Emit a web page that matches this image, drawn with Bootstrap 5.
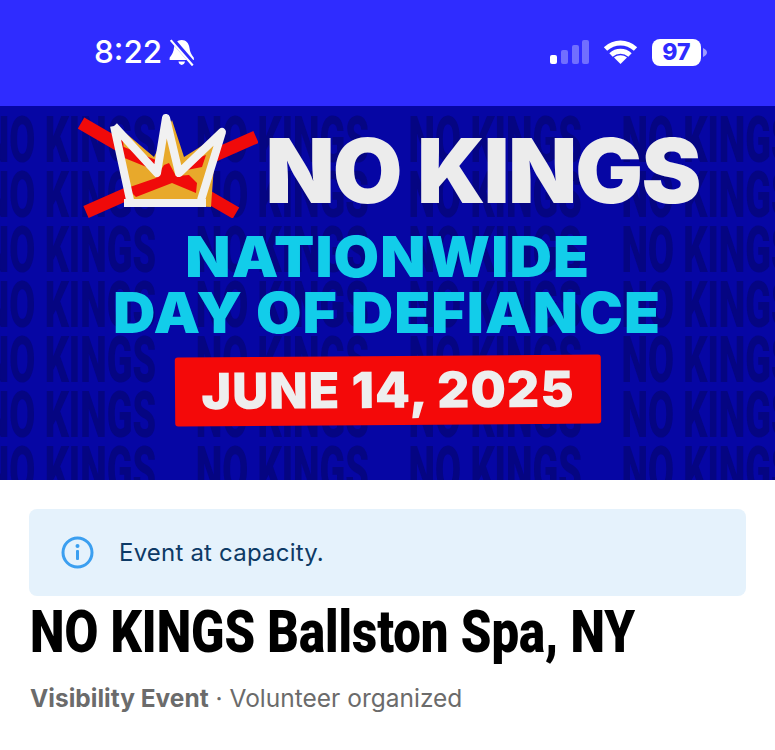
<!doctype html>
<html><head><meta charset="utf-8">
<link href="https://cdn.jsdelivr.net/npm/bootstrap@5.3.0/dist/css/bootstrap.min.css" rel="stylesheet">
<style>
body{background:#fff;margin:0;width:775px;overflow-x:hidden;font-family:Inter,"Liberation Sans",sans-serif}
.stat{height:106px;background:#2f2cff;color:#fff;padding:32px 68px 0 94px;align-items:flex-start}
.clock{font-size:31.500px;font-weight:500;line-height:40px}
.hero{height:374px;background:#0606a4;overflow:hidden;position:relative}
.wall{position:absolute;top:7px;left:-230px;width:2400px;font:900 65px/55px Roboto,sans-serif;color:#050582;white-space:nowrap;transform:scaleX(.58);transform-origin:left top}
.wallrow{display:flex;height:55px}
.wallrow span{flex:0 0 367px}
.art{position:relative;height:100%}
.nk{font:900 90px/90px Inter,sans-serif;color:#ececec;letter-spacing:-1.800px;white-space:nowrap;margin-top:13px}
.hl{font:900 56px/56px Inter,sans-serif;color:#12cdea;letter-spacing:1px;white-space:nowrap;transform:scaleX(1.05)}
.dateb{background:#f40909;width:426px;height:69px;font:900 50px/69px Inter,sans-serif;color:#eee;letter-spacing:1px;transform:rotate(-.4deg);border-radius:3px;margin-top:15px}
.notice{margin:29px 29px 0;height:87px;background:#e5f2fc;border-radius:8px;padding-left:32px;color:#0d3a66;font-size:24px;letter-spacing:.2px;gap:25px}
.ttl{font:900 60px/60px Roboto,sans-serif;color:#000;margin:6px 0 0 30px;white-space:nowrap;transform:scaleX(.817);transform-origin:left center}
.sub{margin:21px 0 0 30px;font-size:24.500px;color:#6b6b6b;line-height:30px}
</style></head><body>
<div class="stat d-flex justify-content-between">
<div class="d-flex align-items-center" style="gap:7px"><span class="clock">8:22</span>
<svg width="26" height="27" viewBox="2 1 22.500 24.500"><path fill="#fff" d="M13 2c4 0 6.500 3 7 7 .5 4 1.500 6 4 9v2H2v-2c2.500-3 3.500-5 4-9 .5-4 3-7 7-7zM10 21.500h6c-.5 2-1.500 3-3 3s-2.500-1-3-3z"/><path stroke="#2f2cff" stroke-width="4.500" d="M4 1l20 23"/><path stroke="#fff" stroke-width="2" d="M3 2l20 23"/></svg></div>
<div class="d-flex align-items-center" style="gap:14px;height:40px">
<svg width="39" height="24" viewBox="0 0 39 24"><rect y="15" width="7" height="9" rx="2" fill="#fff"/><rect x="11" y="10" width="7" height="14" rx="2" fill="#716fff"/><rect x="22" y="5" width="7" height="19" rx="2" fill="#716fff"/><rect x="32" y="0" width="7" height="24" rx="2" fill="#716fff"/></svg>
<svg width="35" height="24" viewBox="0 0 35 24"><path fill="none" stroke="#fff" stroke-width="5" d="M2.500 9c9-8 21-8 30 0M8 15c5.500-5 13.500-5 19 0"/><path fill="#fff" d="M17.500 24l-6.500-6.500c4-3 9-3 13 0z"/></svg>
<svg width="55" height="27" viewBox="0 0 55 27"><rect width="49" height="27" rx="8" fill="#fff"/><text x="24.500" y="21" text-anchor="middle" font-family="Inter" font-weight="800" font-size="23" fill="#2f2cff">97</text><path d="M51 9c2.500 1 4 3 4 4.500S53.500 17 51 18z" fill="#9d9cff"/></svg>
</div></div>
<div class="hero">
<div class="wall">
<div class="wallrow"><span>NO KINGS</span><span>NO KINGS</span><span>NO KINGS</span><span>NO KINGS</span><span>NO KINGS</span><span>NO KINGS</span></div>
<div class="wallrow"><span>NO KINGS</span><span>NO KINGS</span><span>NO KINGS</span><span>NO KINGS</span><span>NO KINGS</span><span>NO KINGS</span></div>
<div class="wallrow"><span>NO KINGS</span><span>NO KINGS</span><span>NO KINGS</span><span>NO KINGS</span><span>NO KINGS</span><span>NO KINGS</span></div>
<div class="wallrow"><span>NO KINGS</span><span>NO KINGS</span><span>NO KINGS</span><span>NO KINGS</span><span>NO KINGS</span><span>NO KINGS</span></div>
<div class="wallrow"><span>NO KINGS</span><span>NO KINGS</span><span>NO KINGS</span><span>NO KINGS</span><span>NO KINGS</span><span>NO KINGS</span></div>
<div class="wallrow"><span>NO KINGS</span><span>NO KINGS</span><span>NO KINGS</span><span>NO KINGS</span><span>NO KINGS</span><span>NO KINGS</span></div>
<div class="wallrow"><span>NO KINGS</span><span>NO KINGS</span><span>NO KINGS</span><span>NO KINGS</span><span>NO KINGS</span><span>NO KINGS</span></div>
</div>
<div class="art d-flex flex-column align-items-center">
<div class="d-flex align-items-start" style="margin-top:7px;margin-left:3px;gap:7px;height:105px">
<svg width="180" height="105" viewBox="0 0 180 105"><path d="M3 10l155 90M8 99L178 24" stroke="#f00a0a" stroke-width="13"/><path d="M44 17l32 27L94 7l12 37 32-20-5 70-82-4z" fill="#e8a92b"/><path d="M49 75l29-10 8-13 5-2 7 13 13-1 8 8-1 10-24-10-36 14zM41 32l37 15-2 10-32-13zM108 49l20-7-4 12-15 3z" fill="#f00a0a"/><path d="M36 13l16 74M36 13l43 47 9-55 13 55 43-41-21 68M46 90h82" fill="none" stroke="#f1f1f1" stroke-width="8" stroke-linejoin="round"/></svg>
<div class="nk">NO KINGS</div></div>
<div class="hl" style="margin-top:11px">NATIONWIDE</div>
<div class="hl">DAY OF DEFIANCE</div>
<div class="dateb text-center">JUNE 14, 2025</div>
</div></div>
<div class="notice d-flex align-items-center">
<svg width="33" height="33" viewBox="0 0 33 33"><circle cx="16.500" cy="16.500" r="14.500" fill="none" stroke="#3b9ff0" stroke-width="3"/><rect x="15" y="14" width="3" height="10" rx="1" fill="#3b9ff0"/><circle cx="16.500" cy="10" r="2" fill="#3b9ff0"/></svg>
<span>Event at capacity.</span></div>
<div class="ttl">NO KINGS Ballston Spa, NY</div>
<div class="sub"><b class="fw-bold">Visibility Event</b> · Volunteer organized</div>
</body></html>
